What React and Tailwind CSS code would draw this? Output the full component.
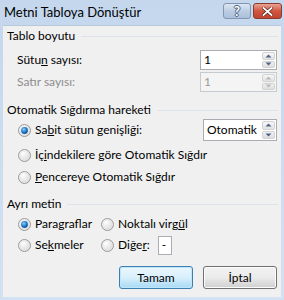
import React from "react";

function Radio({ checked }) {
  return (
    <svg width="13" height="13" viewBox="0 0 13 13" className="shrink-0">
      <defs>
        <radialGradient id="rg" cx="0.35" cy="0.3" r="0.8">
          <stop offset="0" stopColor="#ffffff" />
          <stop offset="1" stopColor="#d6d6d6" />
        </radialGradient>
        <radialGradient id="rb" cx="0.4" cy="0.35" r="0.7">
          <stop offset="0" stopColor="#8fd0fb" />
          <stop offset="0.6" stopColor="#1b74c6" />
          <stop offset="1" stopColor="#0e4f93" />
        </radialGradient>
      </defs>
      <circle cx="6.5" cy="6.5" r="6" fill="url(#rg)" stroke="#9a9a9a" strokeWidth="1" />
      <circle cx="6.5" cy="6.5" r="4.6" fill="none" stroke="#e4e4e4" strokeWidth="0.8" />
      {checked && <circle cx="6.5" cy="6.5" r="3.4" fill="url(#rb)" />}
    </svg>
  );
}

function SpinButtons({ disabled }) {
  const arrow = disabled ? "#b9b9b9" : "#4d6185";
  return (
    <div className="flex flex-col w-[15px] h-full gap-px p-px">
      <div className="flex-1 flex items-center justify-center rounded-[2px] border border-[#d2d2d2] bg-gradient-to-b from-[#f7f7f7] to-[#e2e2e2]">
        <svg width="7" height="4" viewBox="0 0 7 4"><path d="M0.5 3.5 L3.5 0.5 L6.5 3.5 Z" fill={arrow} /></svg>
      </div>
      <div className="flex-1 flex items-center justify-center rounded-[2px] border border-[#d2d2d2] bg-gradient-to-b from-[#f2f2f2] to-[#dcdcdc]">
        <svg width="7" height="4" viewBox="0 0 7 4"><path d="M0.5 0.5 L3.5 3.5 L6.5 0.5 Z" fill={arrow} /></svg>
      </div>
    </div>
  );
}

function SpinBox({ value, disabled, w = "w-[77px]", h = "h-[20px]" }) {
  return (
    <div
      className={`${w} ${h} flex border ${
        disabled ? "border-[#c6cbd1] bg-[#f4f4f4] text-[#9a9a9a]" : "border-[#abadb3] bg-white text-black"
      }`}
    >
      <div className="flex-1 flex items-center pl-[3px]">{value}</div>
      <SpinButtons disabled={disabled} />
    </div>
  );
}

function Heading({ children }) {
  return (
    <div className="flex items-center h-[16px]">
      <span>{children}</span>
      <div className="flex-1 h-px bg-[#dde3e8] ml-[6px] mr-[3px]" />
    </div>
  );
}

export default function App() {
  return (
    <div className="w-[284px] h-[300px] flex flex-col bg-gradient-to-b from-[#c4d7ed] to-[#d3e2f2] text-[12px] leading-none text-black font-['Lato','Noto_Sans',sans-serif]">
      <div className="h-[25px] shrink-0 flex items-start pl-[4px] pr-[2px] pt-[3px]">
        <div className="flex-1 pt-[3px] text-[13px] text-black">Metni Tabloya Dönüştür</div>
        <div className="w-[28px] h-[16px] flex items-center justify-center rounded-[3px] border border-[#8296b0] bg-gradient-to-b from-[#dde7f3] via-[#bccde3] to-[#aac0dc] text-white font-bold text-[13px] [text-shadow:1px_0_0_#4a5f7e,-1px_0_0_#4a5f7e,0_1px_0_#4a5f7e,0_-1px_0_#4a5f7e]">
          ?
        </div>
        <div className="w-[29px] h-[16px] ml-[2px] flex items-center justify-center rounded-[3px] border border-[#8a3b30] bg-gradient-to-b from-[#e8a493] via-[#d2553f] to-[#c0442f]">
          <svg width="11" height="9" viewBox="0 0 11 9">
            <path d="M1.5 1 L9.5 8 M9.5 1 L1.5 8" stroke="#4a1b14" strokeWidth="3" strokeLinecap="square" />
            <path d="M1.5 1 L9.5 8 M9.5 1 L1.5 8" stroke="#ffffff" strokeWidth="1.8" strokeLinecap="square" />
          </svg>
        </div>
      </div>
      <div className="flex-1 mx-[3px] mb-[3px] bg-[#f0f0f0] border-t border-[#b7c7da] pl-[4px] pt-[2px] flex flex-col">
        <Heading>Tablo boyutu</Heading>
        <div className="flex items-center justify-between h-[20px] mt-[6px] pl-[10px] pr-[4px]">
          <span>Sütu<u>n</u> sayısı:</span>
          <SpinBox value="1" />
        </div>
        <div className="flex items-center justify-between h-[20px] mt-[2px] pl-[10px] pr-[4px]">
          <span className="text-[#8d8d8d]">Satır sayısı:</span>
          <SpinBox value="1" disabled />
        </div>

        <div className="mt-[10px]">
          <Heading>Otomatik Sığdırma hareketi</Heading>
        </div>
        <div className="flex items-center justify-between h-[22px] mt-[1px] pl-[11px] pr-[4px]">
          <div className="flex items-center gap-[4px]">
            <Radio checked />
            <span>Sa<u>b</u>it sütun genişliği:</span>
          </div>
          <SpinBox value="Otomatik" w="w-[74px]" h="h-[22px]" />
        </div>
        <div className="flex items-center h-[20px] mt-[4px] pl-[11px] gap-[4px]">
          <Radio />
          <span>İç<u>i</u>ndekilere göre Otomatik Sığdır</span>
        </div>
        <div className="flex items-center h-[20px] mt-[2px] pl-[11px] gap-[4px]">
          <Radio />
          <span><u>P</u>encereye Otomatik Sığdır</span>
        </div>

        <div className="mt-[9px]">
          <Heading>Ayrı metin</Heading>
        </div>
        <div className="grid grid-cols-[83px_1fr] pl-[11px] mt-[2px]">
          <div className="flex items-center h-[20px] gap-[4px]">
            <Radio checked />
            <span>Paragraflar</span>
          </div>
          <div className="flex items-center h-[20px] gap-[4px]">
            <Radio />
            <span>Noktalı virg<u>ü</u>l</span>
          </div>
          <div className="flex items-center h-[20px] gap-[4px] mt-[1px]">
            <Radio />
            <span>Se<u>k</u>meler</span>
          </div>
          <div className="flex items-center h-[20px] gap-[4px] mt-[1px]">
            <Radio />
            <span>Diğe<u>r</u>:</span>
            <div className="ml-[4px] w-[14px] h-[19px] bg-white border border-[#abadb3] flex items-center pl-[3px]">-</div>
          </div>
        </div>

        <div className="flex justify-end gap-[10px] mt-[11px] pr-[4px]">
          <button className="w-[74px] h-[23px] rounded-[3px] border border-[#3c7fb1] bg-gradient-to-b from-[#eaf6fd] via-[#d9f0fc] to-[#a7d9f5] shadow-[inset_0_0_0_1px_#bfe6fb] text-black">
            Tamam
          </button>
          <button className="w-[74px] h-[23px] rounded-[3px] border border-[#707070] bg-gradient-to-b from-[#f2f2f2] via-[#ebebeb] to-[#cfcfcf] shadow-[inset_0_0_0_1px_#fcfcfc] text-black">
            İptal
          </button>
        </div>
      </div>
    </div>
  );
}
